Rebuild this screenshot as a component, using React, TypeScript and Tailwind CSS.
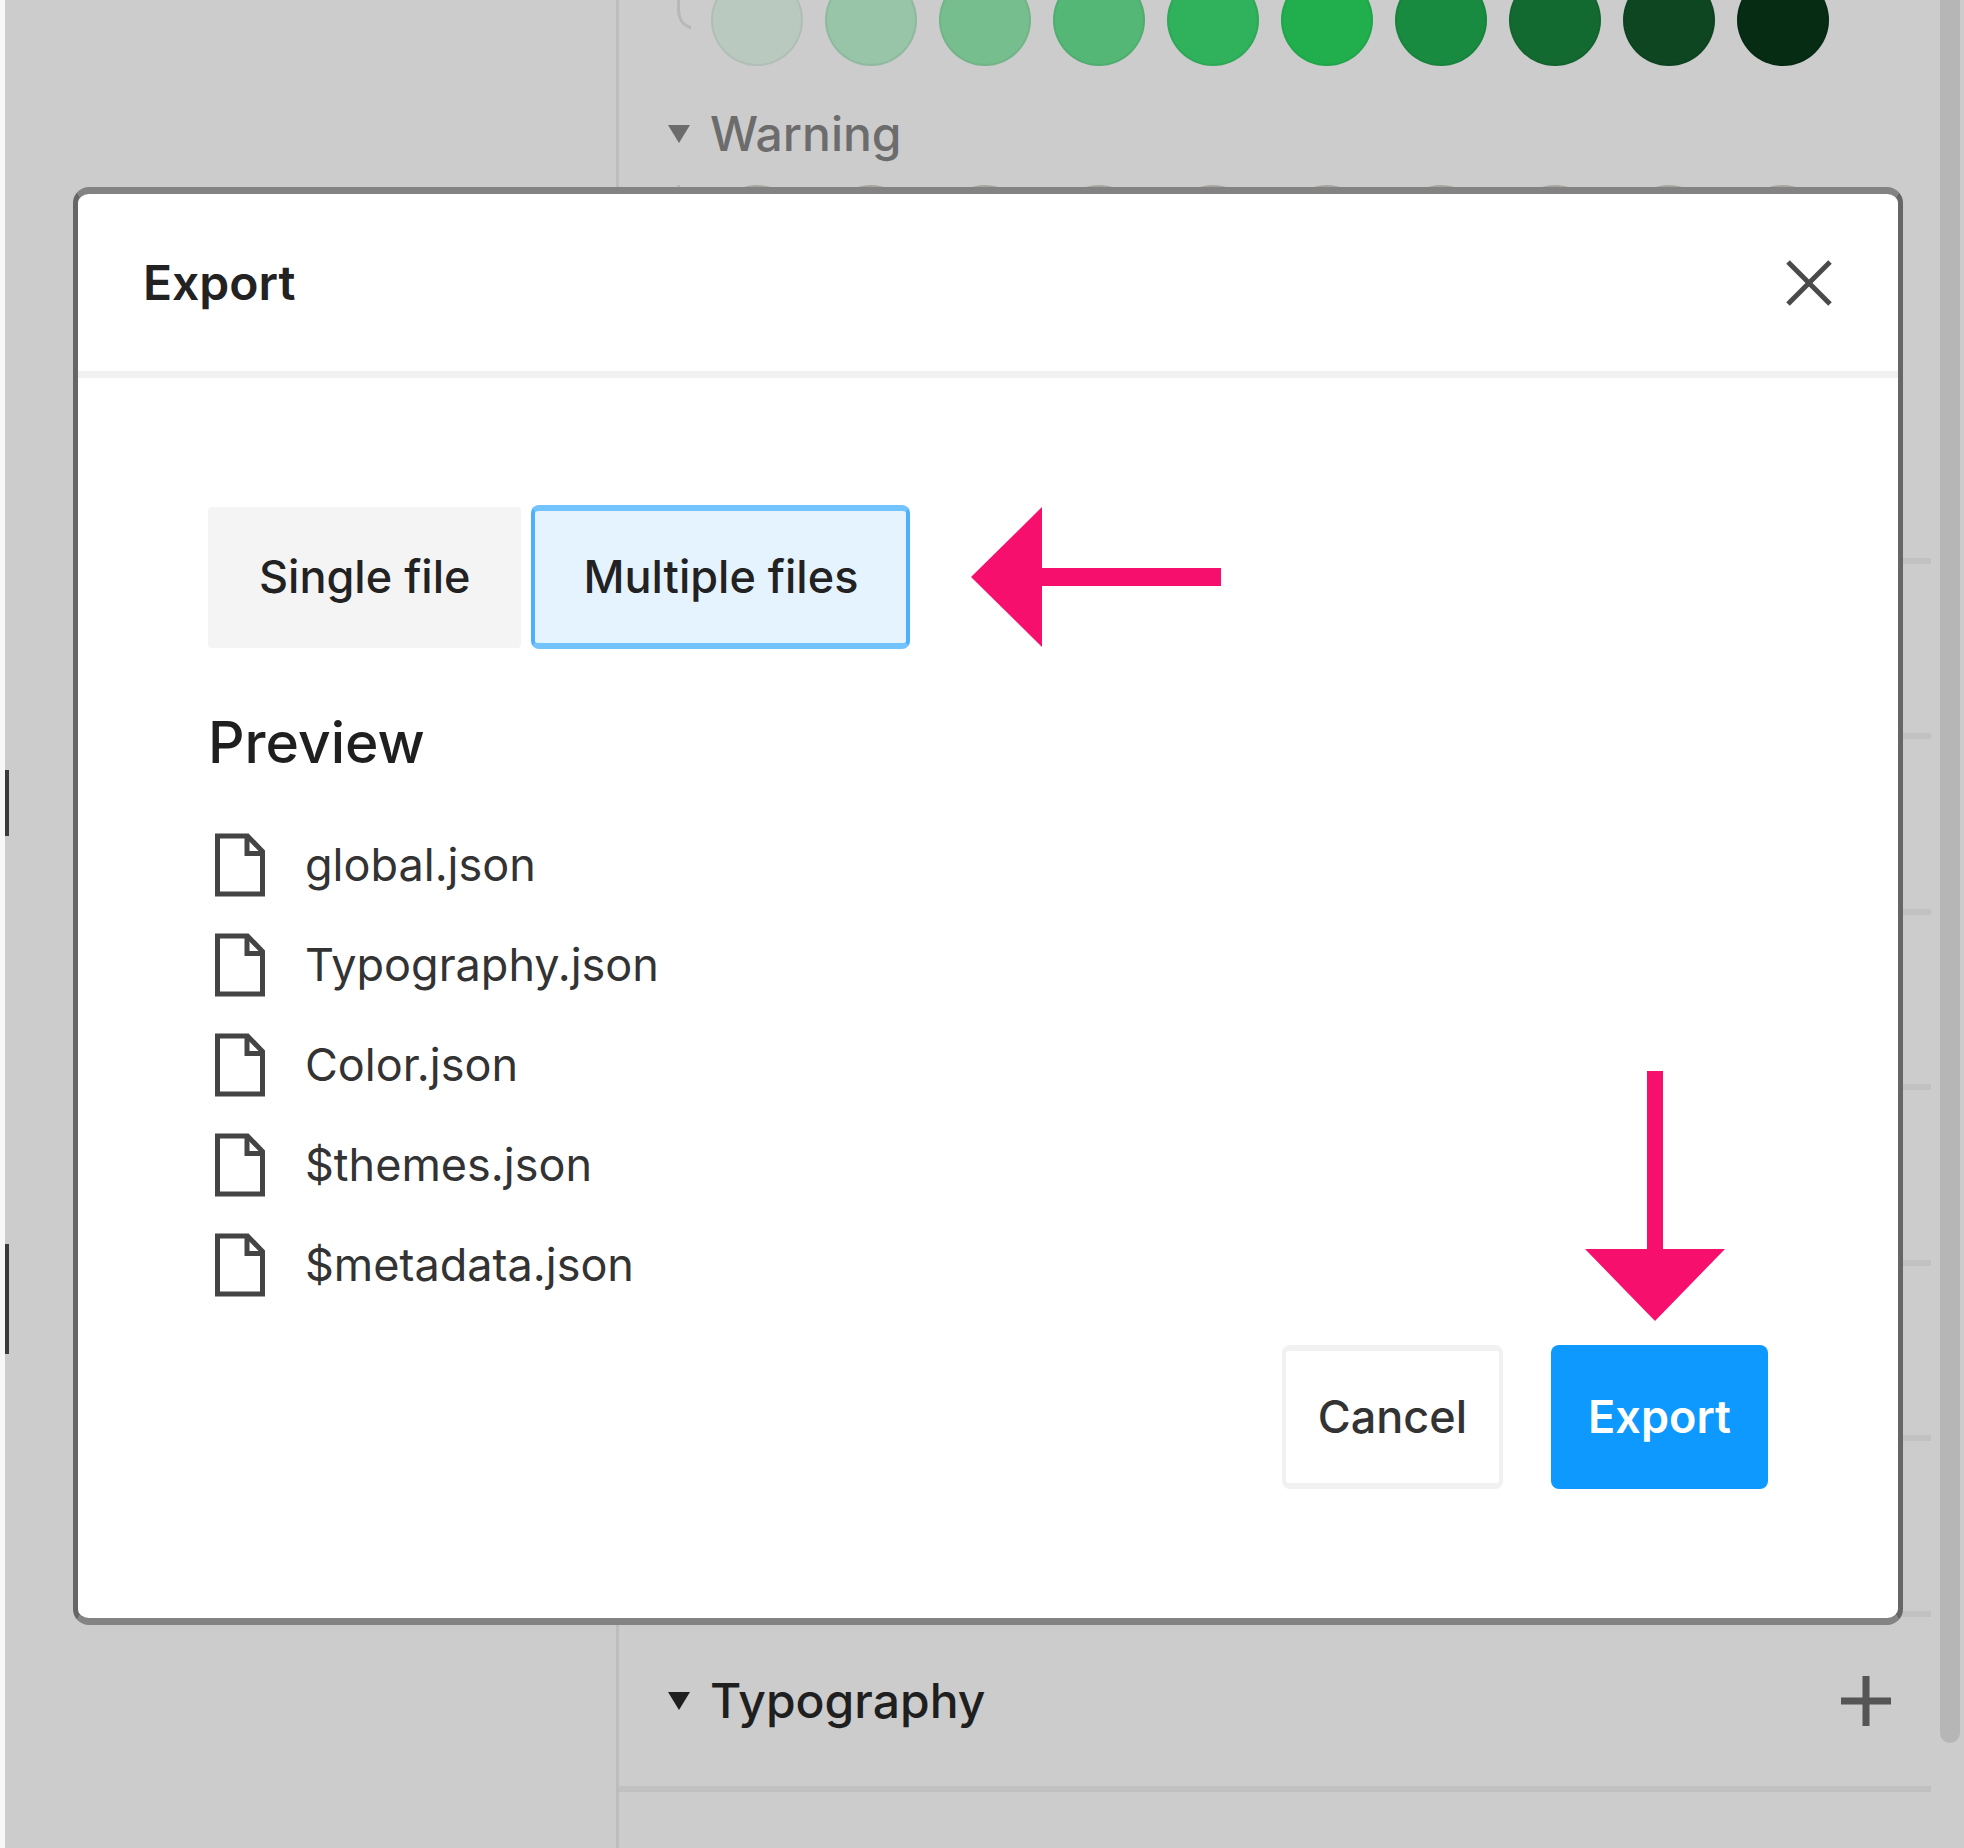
import { useState } from "react";

const successShades = [
  "bg-[#bac9c0]",
  "bg-[#98c4a8]",
  "bg-[#77be8f]",
  "bg-[#54b776]",
  "bg-[#30b15c]",
  "bg-[#21af4d]",
  "bg-[#198b40]",
  "bg-[#136a31]",
  "bg-[#0d4621]",
  "bg-[#062c13]",
];

const files = ["global.json", "Typography.json", "Color.json", "$themes.json", "$metadata.json"];

const modes = ["Single file", "Multiple files"];

function Caret() {
  return (
    <svg className="h-[18px] w-[22px] shrink-0" viewBox="0 0 22 18" fill="currentColor" aria-hidden="true">
      <path d="M0 0H22L11 18Z" />
    </svg>
  );
}

function FileIcon() {
  return (
    <svg className="h-16 w-[50px] shrink-0" viewBox="0 0 50 64" fill="none" stroke="#444" strokeWidth="5" aria-hidden="true">
      <path d="M2.5 3H32.5L47.5 18.5V61H2.5Z" />
      <path d="M32 3V20.5H47.5" />
    </svg>
  );
}

function ArrowLeft() {
  return (
    <svg className="h-[140px] w-[250px] shrink-0" viewBox="0 0 250 140" fill="#f70f6d" aria-hidden="true">
      <path d="M0 70L71 0V61H250V79H71V140Z" />
    </svg>
  );
}

function ArrowDown() {
  return (
    <svg className="h-[250px] w-[140px]" viewBox="0 0 140 250" fill="#f70f6d" aria-hidden="true">
      <path d="M70 250L0 178H62V0H78V178H140Z" />
    </svg>
  );
}

function TokenPanel() {
  return (
    <div className="flex h-full bg-[#cccccc]">
      <div className="flex w-[9px] shrink-0 flex-col border-l-5 border-[#f7f7f7] pt-[770px]">
        <div className="h-[66px] bg-[#3a3a3a]" />
        <div className="mt-[408px] h-[110px] bg-[#3a3a3a]" />
      </div>
      <div className="w-[607px] shrink-0" />
      <main className="min-w-0 flex-1 border-l-[3px] border-[#bdbdbd]">
        <div className="flex h-[66px] items-end pl-[58px]">
          <svg className="h-[66px] w-[34px] shrink-0" viewBox="0 0 34 66" fill="none" stroke="#b8b8b8" strokeWidth="3" aria-hidden="true">
            <path d="M1.500 0V10Q2 24 14 28" />
          </svg>
          <div className="flex gap-[22px]">
            {successShades.map((shade) => (
              <div key={shade} className={`size-[92px] rounded-full border-2 border-black/5 ${shade}`} />
            ))}
          </div>
        </div>
        <h2 className="flex h-[119px] items-center gap-5 pt-4 pl-[49px] text-5xl font-medium text-[#6c6c6c]">
          <Caret />
          Warning
        </h2>
        <div className="flex h-[373px] pl-[58px]">
          <div className="mr-[31px] h-[92px] w-[3px] bg-[#b8b8b8]" />
          <div className="flex gap-[22px]">
            {successShades.map((shade) => (
              <div key={shade} className="size-[92px] rounded-full bg-[#a8a59f]" />
            ))}
          </div>
        </div>
        <div className="mr-[9px] grid h-[1234px] grid-rows-7 border-t-6 border-[#c1c1c1]">
          {[1, 2, 3, 4, 5, 6].map((row) => (
            <div key={row} className="border-b-6 border-[#c1c1c1]" />
          ))}
          <section className="flex items-center justify-between border-b-6 border-[#c1c1c1] pr-10 pl-[49px]">
            <h2 className="flex items-center gap-5 text-5xl font-medium text-[#1f1f1f]">
              <Caret />
              Typography
            </h2>
            <button type="button" aria-label="Add typography token">
              <svg className="size-[50px]" viewBox="0 0 50 50" fill="none" stroke="#555" strokeWidth="7" aria-hidden="true">
                <path d="M25 0V50M0 25H50" />
              </svg>
            </button>
          </section>
        </div>
      </main>
      <div className="mr-1 w-5 shrink-0">
        <div className="h-[1743px] rounded-b-full bg-[#b6b6b6]" />
      </div>
    </div>
  );
}

function ExportDialog() {
  const [mode, setMode] = useState("Multiple files");
  return (
    <div
      role="dialog"
      aria-modal="true"
      aria-labelledby="export-title"
      className="w-full rounded-2xl border-x-5 border-y-7 border-x-[#666] border-y-[#838383] bg-white"
    >
      <header className="flex h-[184px] items-center justify-between border-b-7 border-[#f1f1f1] pr-[66px] pl-[65px]">
        <h1 id="export-title" className="text-5xl font-semibold text-[#222]">
          Export
        </h1>
        <button type="button" aria-label="Close">
          <svg className="size-[46px]" viewBox="0 0 46 46" fill="none" stroke="#4a4a4a" strokeWidth="5" aria-hidden="true">
            <path d="M2 2L44 44M44 2L2 44" />
          </svg>
        </button>
      </header>
      <div className="px-[130px] pt-[127px] pb-[129px]">
        <div className="flex items-center gap-2.5">
          {modes.map((name) => (
            <button
              key={name}
              type="button"
              aria-pressed={mode === name}
              onClick={() => setMode(name)}
              className={
                mode === name
                  ? "h-36 rounded-lg border-x-4 border-y-6 border-x-[#4db0ff] border-y-[#73c3ff] bg-[#e5f3ff] px-12 text-[45px] font-medium text-[#222]"
                  : "h-[141px] rounded-sm bg-[#f4f4f4] px-[51px] text-[45px] font-medium text-[#222]"
              }
            >
              {name}
            </button>
          ))}
          <div className="ml-[51px]">
            <ArrowLeft />
          </div>
        </div>
        <h2 className="mt-[62px] mb-10 text-[57px] leading-16 font-medium text-[#1f1f1f]">Preview</h2>
        <ul>
          {files.map((file) => (
            <li key={file} className="flex h-[100px] items-center gap-10 pl-[7px] text-[45px] text-[#333]">
              <FileIcon />
              {file}
            </li>
          ))}
        </ul>
        <div className="mt-[30px] flex justify-end gap-12">
          <button type="button" className="h-36 rounded-lg border-x-4 border-y-6 border-[#f1f1f1] px-8 text-[45px] font-medium text-[#333]">
            Cancel
          </button>
          <div className="relative">
            <button type="button" className="h-36 rounded-lg bg-[#0d99ff] px-[37px] text-[45px] font-semibold text-white">
              Export
            </button>
            <div className="pointer-events-none absolute bottom-full left-[34px] mb-6">
              <ArrowDown />
            </div>
          </div>
        </div>
      </div>
    </div>
  );
}

export default function App() {
  return (
    <div className="relative h-screen overflow-hidden font-['Inter',sans-serif]">
      <TokenPanel />
      <div className="absolute inset-0 pt-[187px] pr-[61px] pl-[73px]">
        <ExportDialog />
      </div>
    </div>
  );
}
